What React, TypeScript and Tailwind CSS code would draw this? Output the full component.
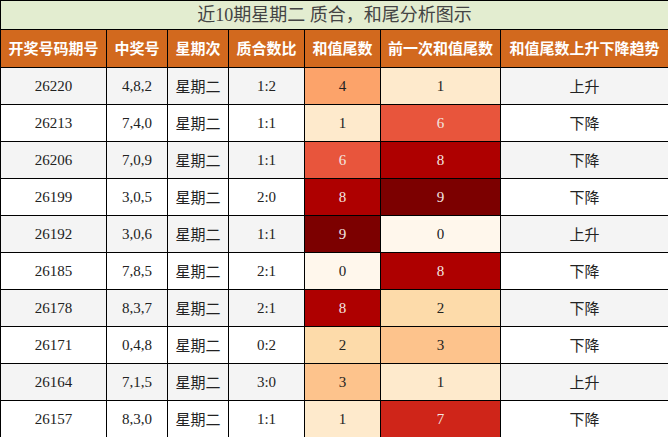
const ROWS = [
  { issue: '26220', nums: '4,8,2', ratio: '1:2', tail: 4, prev: 1, trend: '上升' },
  { issue: '26213', nums: '7,4,0', ratio: '1:1', tail: 1, prev: 6, trend: '下降' },
  { issue: '26206', nums: '7,0,9', ratio: '1:1', tail: 6, prev: 8, trend: '下降' },
  { issue: '26199', nums: '3,0,5', ratio: '2:0', tail: 8, prev: 9, trend: '下降' },
  { issue: '26192', nums: '3,0,6', ratio: '1:1', tail: 9, prev: 0, trend: '上升' },
  { issue: '26185', nums: '7,8,5', ratio: '2:1', tail: 0, prev: 8, trend: '下降' },
  { issue: '26178', nums: '8,3,7', ratio: '2:1', tail: 8, prev: 2, trend: '下降' },
  { issue: '26171', nums: '0,4,8', ratio: '0:2', tail: 2, prev: 3, trend: '下降' },
  { issue: '26164', nums: '7,1,5', ratio: '3:0', tail: 3, prev: 1, trend: '上升' },
  { issue: '26157', nums: '8,3,0', ratio: '1:1', tail: 1, prev: 7, trend: '下降' }
]

// heat colours per tail digit
const HEAT: Record<number, string> = {
  0: 'bg-[#fff7ec] text-[#222]',
  1: 'bg-[#feeacc] text-[#222]',
  2: 'bg-[#fddbaa] text-[#222]',
  3: 'bg-[#fdc38c] text-[#222]',
  4: 'bg-[#fca36a] text-[#222]',
  5: 'bg-[#f3794f] text-white',
  6: 'bg-[#e8553c] text-[#f3e6e0]',
  7: 'bg-[#cf2519] text-[#f3e6e0]',
  8: 'bg-[#ae0000] text-[#f3e6e0]',
  9: 'bg-[#7c0000] text-[#f3e6e0]'
}

const COLUMNS = [
  { name: '开奖号码期号', width: 'w-[106px]' },
  { name: '中奖号', width: 'w-[61px]' },
  { name: '星期次', width: 'w-[61px]' },
  { name: '质合数比', width: 'w-[76px]' },
  { name: '和值尾数', width: 'w-[76px]' },
  { name: '前一次和值尾数', width: 'w-[120px]' },
  { name: '和值尾数上升下降趋势', width: 'w-[168px]' }
]

const cjk = "font-['Noto_Sans_CJK_SC',sans-serif]"

export default function App() {
  return (
    <div className="w-[668px] h-[437px] bg-white font-['Liberation_Serif','Noto_Sans_CJK_SC',sans-serif]">
      <table className="w-[668px] table-fixed border-collapse border border-black">
        <colgroup>
          {COLUMNS.map((c) => (
            <col key={c.name} className={c.width} />
          ))}
        </colgroup>
        <thead>
          <tr className="h-[29px] bg-[#e3edd0]">
            <th colSpan={7} className="border border-black p-0 text-[18px] font-normal text-[#444]">
              近10期星期二 质合，和尾分析图示
            </th>
          </tr>
          <tr className="h-[38px] bg-[#d2691e]">
            {COLUMNS.map((c) => (
              <th key={c.name} className={`border border-black p-0 text-[15px] font-bold text-white ${cjk}`}>
                {c.name}
              </th>
            ))}
          </tr>
        </thead>
        <tbody>
          {ROWS.map((r, i) => {
            const base = i % 2 === 0 ? 'bg-[#f4f4f4]' : 'bg-white'
            return (
              <tr key={r.issue} className="h-[37px] text-[15px] text-[#222]">
                <td className={`border border-black p-0 text-center ${base}`}>{r.issue}</td>
                <td className={`border border-black p-0 text-center ${base}`}>{r.nums}</td>
                <td className={`border border-black p-0 text-center ${cjk} ${base}`}>星期二</td>
                <td className={`border border-black p-0 text-center ${base}`}>{r.ratio}</td>
                <td className={`border border-black p-0 text-center ${HEAT[r.tail]}`}>{r.tail}</td>
                <td className={`border border-black p-0 text-center ${HEAT[r.prev]}`}>{r.prev}</td>
                <td className={`border border-black p-0 text-center ${cjk} ${base}`}>{r.trend}</td>
              </tr>
            )
          })}
        </tbody>
      </table>
    </div>
  )
}
